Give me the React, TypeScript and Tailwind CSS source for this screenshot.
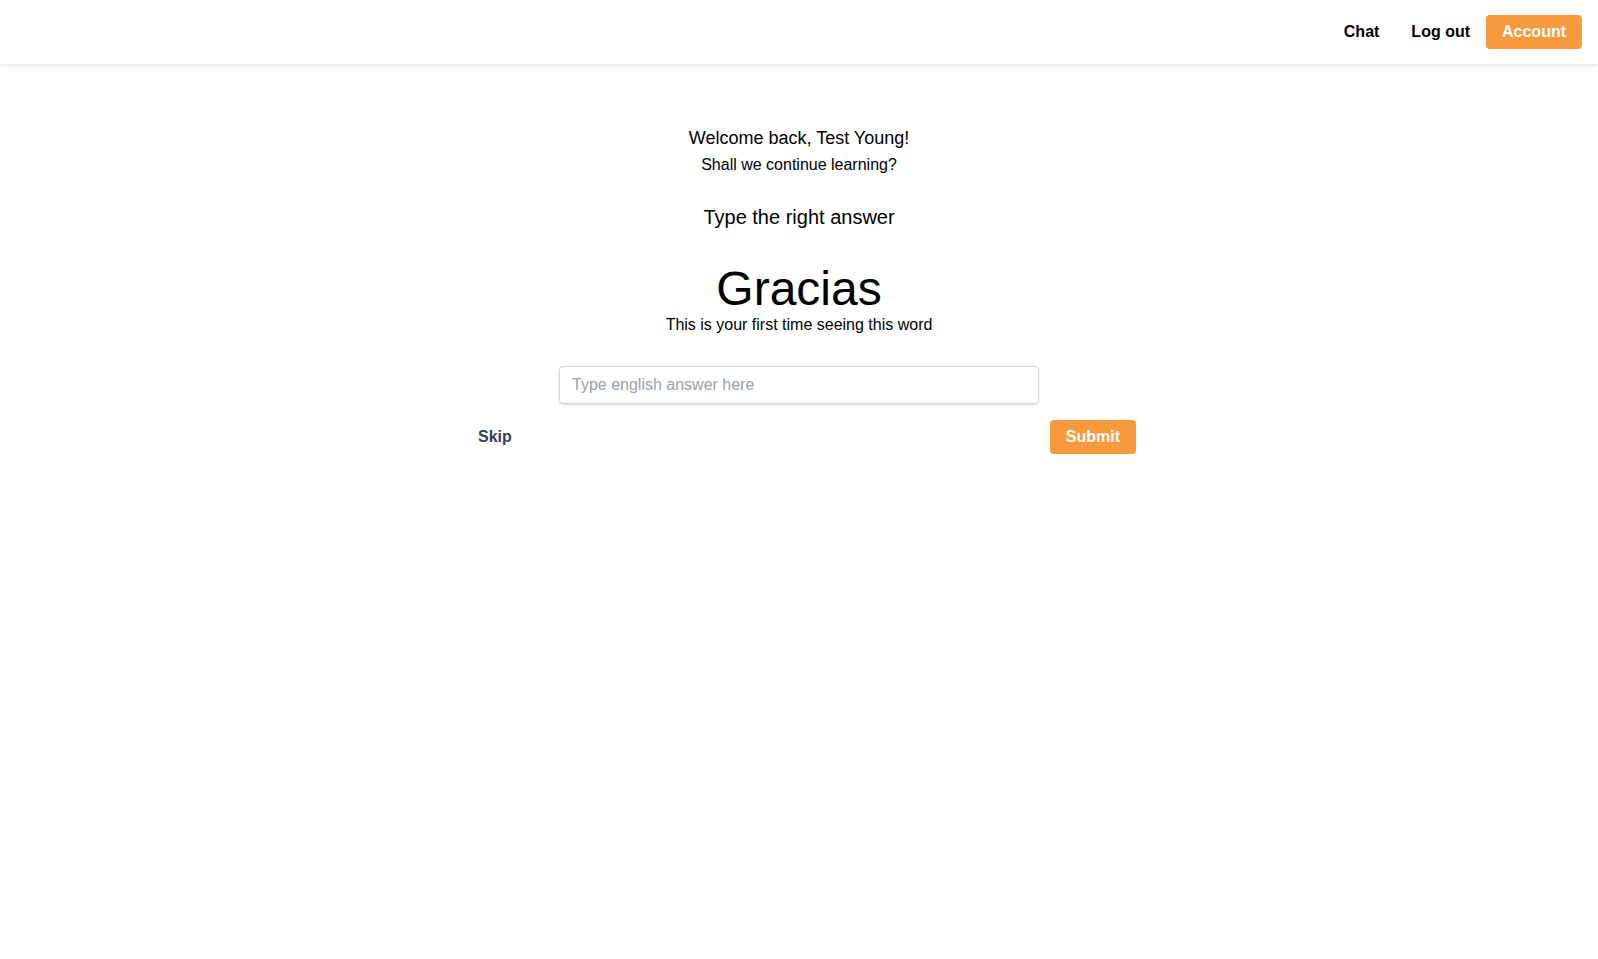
export default function App() {
  return (
    <div className="min-h-screen bg-white font-['Liberation_Sans',Arial,sans-serif] text-black">
      {/* Navbar */}
      <nav className="h-16 flex items-center justify-end pr-4 shadow-[0_1px_4px_rgba(0,0,0,0.12)]">
        <div className="flex items-center">
          <button className="px-4 py-2 text-base font-bold text-black">Chat</button>
          <button className="px-4 py-2 text-base font-bold text-black">Log out</button>
          <button className="h-[34px] px-4 rounded bg-[#f79a3e] text-base font-bold text-white">
            Account
          </button>
        </div>
      </nav>

      {/* Main */}
      <main className="flex flex-col items-center text-center pt-[62px]">
        <h2 className="text-lg leading-6">Welcome back, Test Young!</h2>
        <p className="text-base leading-6 mt-[3px]">Shall we continue learning?</p>

        <h3 className="text-xl leading-7 mt-[26px]">Type the right answer</h3>

        <h1 className="text-5xl leading-none mt-[34px]">Gracias</h1>
        <p className="text-base leading-5 mt-[2px]">This is your first time seeing this word</p>

        <input
          type="text"
          placeholder="Type english answer here"
          className="mt-[31px] w-[480px] h-[38px] px-3 rounded border border-gray-300 shadow-sm text-base placeholder:text-gray-400 outline-none"
        />

        <div className="w-full max-w-[674px] flex justify-between items-center mt-4">
          <button className="px-4 py-1 text-base font-bold text-gray-700">Skip</button>
          <button className="h-[34px] px-4 rounded bg-[#f79a3e] text-base font-bold text-white">
            Submit
          </button>
        </div>
      </main>
    </div>
  );
}
